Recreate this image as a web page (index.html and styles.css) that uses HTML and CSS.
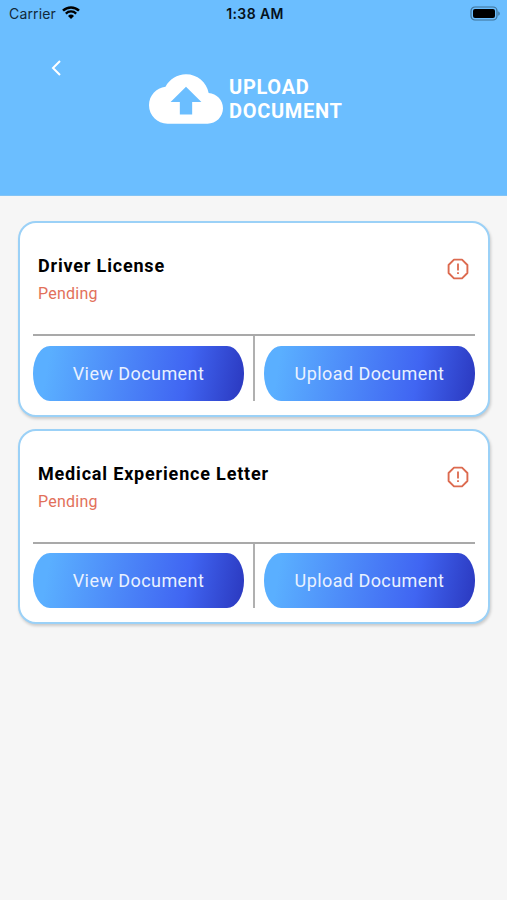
FILE: index.html
```html
<!DOCTYPE html>
<html lang="en">
<head>
  <meta charset="UTF-8" />
  <meta name="viewport" content="width=device-width, initial-scale=1.0"/>
  <title>Upload Document</title>
  <link rel="stylesheet" href="styles.css">
</head>
<body>

<header class="header">
  <div class="status-bar">
    <div class="carrier">
      <span class="carrier-name">Carrier</span>
      <svg class="wifi" viewBox="0 0 18 13" width="18" height="13">
        <path d="M1 4.7a11.4 11.4 0 0 1 16 0" fill="none" stroke="#000" stroke-width="2.5"/>
        <path d="M3.8 7.6a7.4 7.4 0 0 1 10.4 0" fill="none" stroke="#000" stroke-width="2.2"/>
        <path d="M9 13 6 10a4.3 4.3 0 0 1 6 0z"/>
      </svg>
    </div>
    <span class="time">1:38 AM</span>
    <svg class="battery" viewBox="0 0 31 15" width="31" height="15">
      <rect x="1" y="1" width="26" height="13" rx="4" fill="none" stroke="#3e7196" stroke-width="1.2"/>
      <rect x="3" y="3" width="22" height="9" rx="2"/>
      <path d="M28.3 5.2c1.9.8 1.9 3.8 0 4.6z" fill="#3e7196"/>
    </svg>
  </div>
  <button class="back" aria-label="Back">
    <svg viewBox="0 0 10 16" width="10" height="16">
      <path d="M9 1 2 8l7 7" fill="none" stroke="#fff" stroke-width="2"/>
    </svg>
  </button>
  <div class="title">
    <svg class="cloud" viewBox="0 4 24 16" width="74" height="50">
      <path fill="#fff" d="M19.35 10.04C18.67 6.59 15.64 4 12 4 9.11 4 6.6 5.64 5.35 8.04 2.34 8.36 0 10.91 0 14c0 3.31 2.69 6 6 6h13c2.76 0 5-2.24 5-5 0-2.64-2.05-4.78-4.65-4.96zM14 13v4h-4v-4H7l5-5 5 5h-3z"/>
    </svg>
    <h1>UPLOAD<br>DOCUMENT</h1>
  </div>
</header>

<main class="documents">
  <section class="card">
    <div class="info">
      <div>
        <h2>Driver License</h2>
        <p class="pending">Pending</p>
      </div>
      <svg class="alert" viewBox="0 0 22 22" width="22" height="22">
        <path d="M7 1.6h8L20.4 7v8L15 20.4H7L1.6 15V7z" fill="none" stroke="#dc6a4f" stroke-width="1.9" stroke-linejoin="round"/>
        <path d="M11 5.6v6.9M11 14.2v1.8" stroke="#dc6a4f" stroke-width="1.8"/>
      </svg>
    </div>
    <div class="actions">
      <button class="btn">View Document</button>
      <div class="divider"></div>
      <button class="btn">Upload Document</button>
    </div>
  </section>

  <section class="card">
    <div class="info">
      <div>
        <h2>Medical Experience Letter</h2>
        <p class="pending">Pending</p>
      </div>
      <svg class="alert" viewBox="0 0 22 22" width="22" height="22">
        <path d="M7 1.6h8L20.4 7v8L15 20.4H7L1.6 15V7z" fill="none" stroke="#dc6a4f" stroke-width="1.9" stroke-linejoin="round"/>
        <path d="M11 5.6v6.9M11 14.2v1.8" stroke="#dc6a4f" stroke-width="1.8"/>
      </svg>
    </div>
    <div class="actions">
      <button class="btn">View Document</button>
      <div class="divider"></div>
      <button class="btn">Upload Document</button>
    </div>
  </section>
</main>

</body>
</html>
```
FILE: styles.css
```css
* {
  box-sizing: border-box;
  font-family: Roboto, Arial, sans-serif;
}

body {
  margin: 0;
  min-height: 100vh;
  background-color: #f6f6f6;
}

h1, h2, p {
  margin: 0;
}

button {
  padding: 0;
  border: none;
  background: none;
}

.header {
  height: 196px;
  background-color: #6bbeff;
  border-bottom: 1px solid #83c4f5;
}

.status-bar {
  display: grid;
  grid-template-columns: 1fr auto 1fr;
  align-items: center;
  height: 27px;
  padding: 0 6px 0 9px;
}

.carrier {
  display: flex;
  align-items: center;
  gap: 6px;
}

.carrier-name, .time {
  font-family: Inter, sans-serif;
  font-size: 14px;
}

.carrier-name {
  letter-spacing: 0.15px;
  color: #12293a;
}

.time {
  font-weight: 600;
  letter-spacing: 0.4px;
  color: #06121c;
}

.wifi {
  margin-top: -2px;
}

.battery {
  justify-self: end;
}

.back {
  display: block;
  height: 16px;
  margin: 33px 0 0 51px;
}

.back svg {
  display: block;
}

.title {
  display: flex;
  align-items: center;
  gap: 6px;
  margin: -2px 0 0 149px;
}

h1 {
  font-size: 20px;
  line-height: 24px;
  font-weight: 700;
  letter-spacing: 0.7px;
  color: #fff;
}

.documents {
  display: flex;
  flex-direction: column;
  gap: 12px;
  padding: 25px 17px 0 18px;
}

.card {
  height: 195.6px;
  padding: 0 13px;
  background-color: #fff;
  border: 2px solid #9bd1f7;
  border-radius: 18px;
  box-shadow: 1px 2px 3px rgba(0, 0, 0, 0.18);
}

.info {
  display: flex;
  justify-content: space-between;
  height: 113px;
  padding: 31px 6px 0 5px;
  border-bottom: 2px solid #a9a9a9;
}

h2 {
  font-size: 18px;
  line-height: 24px;
  font-weight: 700;
  letter-spacing: 0.82px;
  color: #000;
}

.pending {
  margin-top: 4px;
  font-size: 16px;
  line-height: 24px;
  letter-spacing: 0.25px;
  color: #e2705a;
}

.alert {
  margin-top: 4px;
}

.actions {
  display: flex;
  align-items: flex-end;
  justify-content: space-between;
  height: 64.5px;
}

.divider {
  width: 2px;
  height: 64.5px;
  background-color: #b0b0b0;
}

.btn {
  width: 211px;
  height: 55px;
  border-radius: 17px / 27px;
  background: linear-gradient(100deg, #5aafff 8%, #4065f2 72%, #2c3bc2 98%);
  color: #e9f1ff;
  font-size: 18px;
  letter-spacing: 0.43px;
}
```
